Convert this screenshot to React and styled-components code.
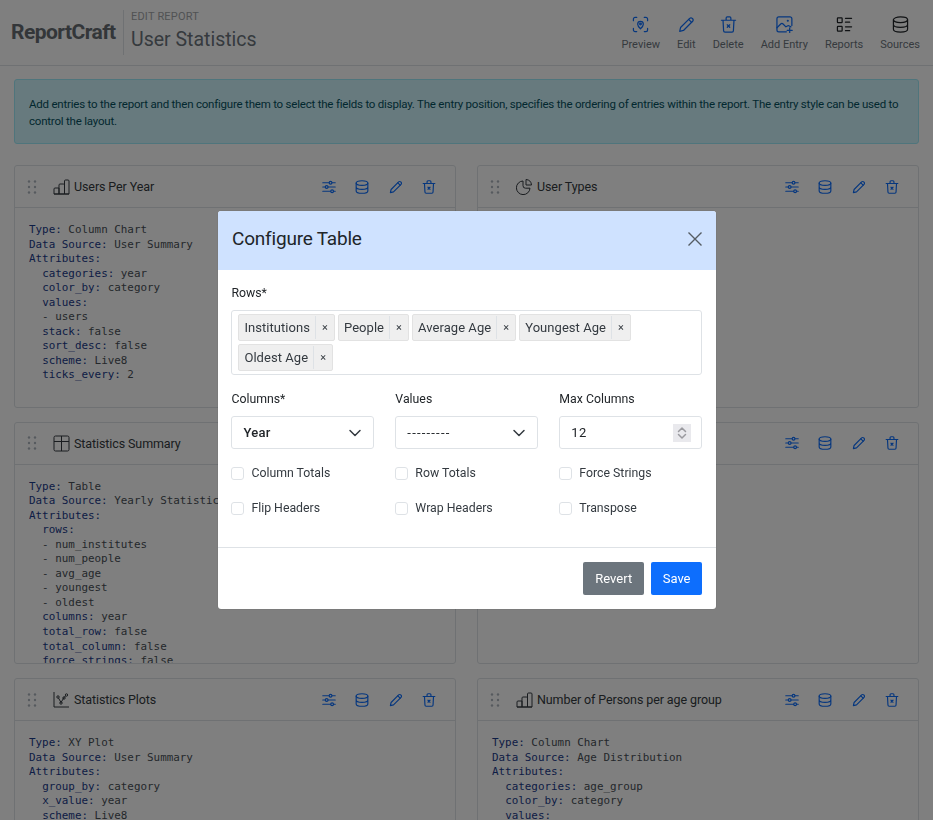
import React from "react";
import styled, { createGlobalStyle } from "styled-components";

const GlobalStyle = createGlobalStyle`
  html, body {
    margin: 0;
    height: 100%;
    overflow: hidden;
    background: #fff;
    font-family: Roboto, "Noto Sans", sans-serif;
    color: #212529;
  }
  * { box-sizing: border-box; }
`;

const Page = styled.div`
  height: 820px;
  overflow: hidden;
`;

const Header = styled.header`
  display: flex;
  align-items: center;
  height: 66px;
  padding: 0 13px 0 11px;
  border-bottom: 1px solid #dee2e6;
`;

const Logo = styled.div`
  width: 112px;
  padding-bottom: 2px;
  font-size: 21px;
  font-weight: 700;
  letter-spacing: -0.55px;
  color: #666c72;
  white-space: nowrap;
`;

const TitleBlock = styled.div`
  border-left: 1px solid #dee2e6;
  height: 45px;
  padding-left: 7px;
  display: flex;
  flex-direction: column;
`;

const Eyebrow = styled.div`
  font-size: 11px;
  line-height: 13px;
  color: #a2a5a8;
  letter-spacing: 0.2px;
`;

const PageTitle = styled.div`
  font-size: 19.5px;
  line-height: 33px;
  color: #6c757d;
`;

const Toolbar = styled.nav`
  margin-left: auto;
  display: flex;
  gap: 17px;
`;

const Tool = styled.div`
  display: flex;
  flex-direction: column;
  align-items: center;
  padding-top: 2px;
  font-size: 11px;
  line-height: 14px;
  color: #6c757d;
  gap: 5px;
`;

const ToolIcon = styled.svg`
  width: 17px;
  height: 17px;
  fill: none;
  stroke: ${(p) => p.$color || "#0d6efd"};
  stroke-width: 1.3;
  stroke-linecap: round;
  stroke-linejoin: round;
`;

const Notice = styled.div`
  margin: 13px 14px 21px;
  padding: 16px 14px;
  height: 65px;
  background: #cff4fc;
  border: 1px solid #9eeaf9;
  border-radius: 3px;
  color: #055160;
  font-size: 11.5px;
  letter-spacing: -0.21px;
  line-height: 17px;
`;

const Grid = styled.div`
  display: grid;
  grid-template-columns: 442px 442px;
  column-gap: 21px;
  row-gap: 14px;
  padding: 0 14px;
`;

const Card = styled.section`
  height: 242.5px;
  border: 1px solid #dee2e6;
  border-radius: 3px;
  overflow: hidden;
`;

const CardHeader = styled.div`
  display: flex;
  align-items: center;
  height: 42px;
  padding: 0 19px 0 12px;
  border-bottom: 1px solid #dee2e6;
  font-size: 12.5px;
  letter-spacing: -0.1px;
  color: #343a40;
`;

const Grip = styled.svg`
  width: 10px;
  height: 14px;
  margin-right: 16px;
  fill: #adb5bd;
`;

const TitleIcon = styled.svg`
  width: 17px;
  height: 17px;
  margin-right: 4px;
  fill: none;
  stroke: #343a40;
  stroke-width: 1;
`;

const CardActions = styled.div`
  margin-left: auto;
  display: flex;
  gap: 19.3px;
`;

const ActionIcon = styled(ToolIcon)`
  width: 14px;
  height: 14px;
  stroke-width: 1.5;
`;

const Yaml = styled.pre`
  margin: 0;
  padding: 15px 14px 0;
  font-family: "DejaVu Sans Mono", monospace;
  font-size: 10.9px;
  line-height: 14.55px;
  letter-spacing: 0;
  color: #495057;
`;

const Key = styled.span`
  color: #1a3a8a;
`;

const Backdrop = styled.div`
  position: fixed;
  inset: 0;
  background: rgba(0, 0, 0, 0.5);
`;

const Modal = styled.div`
  position: fixed;
  left: 218px;
  top: 211px;
  width: 498px;
  height: 398px;
  background: #fff;
  border-radius: 3px;
  display: flex;
  flex-direction: column;
  overflow: hidden;
  box-shadow: 0 0 1px rgba(0, 0, 0, 0.4);
`;

const ModalHeader = styled.div`
  height: 59px;
  flex: none;
  background: #cfe2ff;
  display: flex;
  align-items: center;
  justify-content: space-between;
  padding: 0 14px 4px 14px;
`;

const ModalTitle = styled.h5`
  margin: 0;
  font-size: 19px;
  letter-spacing: -0.2px;
  font-weight: 400;
  color: #212529;
`;

const CloseIcon = styled.svg`
  width: 14px;
  height: 14px;
  stroke: #555c63;
  stroke-width: 1.4;
  fill: none;
`;

const ModalBody = styled.div`
  flex: 1;
  padding: 14px 14px 0 13.4px;
`;

const Label = styled.div`
  font-size: 12.3px;
  line-height: 17px;
  color: #212529;
  padding-top: 1px;
  margin-bottom: 8px;
`;

const TagBox = styled.div`
  display: flex;
  flex-wrap: wrap;
  gap: 3px 3px;
  min-height: 65px;
  padding: 3px 6px;
  border: 1px solid #dee2e6;
  border-radius: 3px;
  margin-bottom: 15px;
`;

const Tag = styled.div`
  display: flex;
  align-items: center;
  height: 27px;
  background: #efefef;
  border: 1px solid #e2e2e2;
  border-radius: 2px;
  font-size: 13px;
  letter-spacing: 0.05px;
  color: #343a40;
`;

const TagText = styled.span`
  padding: 0 5px;
  line-height: 23px;
  border-right: 1px solid #dee2e6;
`;

const TagClose = styled.span`
  width: 18px;
  text-align: center;
  font-size: 11px;
`;

const FormGrid = styled.div`
  display: grid;
  grid-template-columns: repeat(3, 1fr);
  column-gap: 21.3px;
`;

const Control = styled.div`
  position: relative;
  display: flex;
  align-items: center;
  justify-content: space-between;
  height: 33px;
  padding: 0 11px;
  border: 1px solid #dee2e6;
  border-radius: 3px;
  font-size: 13px;
  font-weight: ${(p) => (p.$bold ? 500 : 400)};
  letter-spacing: ${(p) => (p.$spaced ? "1.2px" : "0.3px")};
  color: #212529;
  margin-bottom: 12px;
`;

const Chevron = styled.svg`
  width: 14px;
  height: 14px;
  fill: none;
  stroke: ${(p) => p.$color || "#343a40"};
  stroke-width: 1.5;
  stroke-linecap: round;
  stroke-linejoin: round;
`;

const Spinner = styled.div`
  width: 18px;
  height: 18px;
  margin-right: -1px;
  background: #e9e9ed;
  display: flex;
  align-items: center;
  justify-content: center;
`;

const Check = styled.label`
  display: flex;
  align-items: center;
  gap: 7px;
  height: 23px;
  margin-bottom: 12px;
  font-size: 12.3px;
  color: #343a40;
`;

const Box = styled.span`
  width: 13px;
  height: 13px;
  margin-top: 1px;
  border: 1px solid #dee2e6;
  border-radius: 3px;
`;

const ModalFooter = styled.div`
  flex: none;
  height: 62px;
  border-top: 1px solid #dee2e6;
  display: flex;
  align-items: center;
  justify-content: flex-end;
  gap: 7px;
  padding: 0 14px;
`;

const Button = styled.button`
  height: 33px;
  padding: 0 ${(p) => (p.$primary ? "11.5px" : "12px")};
  border: 0;
  border-radius: 2px;
  color: #fff;
  font-family: inherit;
  font-size: 13px;
  background: ${(p) => (p.$primary ? "#0d6efd" : "#6c757d")};
`;

const icons = {
  preview: (
    <>
      <path d="M1.5 5V3.2a1.7 1.7 0 0 1 1.7-1.7H5M13 1.5h1.8a1.7 1.7 0 0 1 1.7 1.7V5M16.5 13v1.8a1.7 1.7 0 0 1-1.7 1.7H13M5 16.5H3.2a1.7 1.7 0 0 1-1.7-1.7V13" />
      <path d="M9 13.5c-1.6-1.5-3-3.2-3-4.8a3 3 0 0 1 6 0c0 1.6-1.4 3.3-3 4.8z" />
      <circle cx="9" cy="8.5" r=".9" />
    </>
  ),
  edit: (
    <>
      <path d="M1.8 16.2l.9-4 9.7-9.7a1.9 1.9 0 0 1 2.7 0l.4.4a1.9 1.9 0 0 1 0 2.7l-9.7 9.7z" />
      <path d="M11.3 3.6l3.1 3.1" />
    </>
  ),
  trash: (
    <>
      <path d="M1.5 4.5h15M3.2 4.5l.6 11a1.5 1.5 0 0 0 1.5 1.5h7.4a1.5 1.5 0 0 0 1.5-1.5l.6-11M6.5 4.5V2.2A1.2 1.2 0 0 1 7.7 1h2.6a1.2 1.2 0 0 1 1.2 1.2v2.3" />
      <path d="M7.7 9.3l2.6 2.6M10.3 9.3l-2.6 2.6" />
    </>
  ),
  add: (
    <>
      <path d="M16.8 10V3A2 2 0 0 0 14.8 1H3A2 2 0 0 0 1 3v11.8a2 2 0 0 0 2 2h8" />
      <path d="M1 12.5L5 8.5c.8-.8 1.7-.8 2.5 0l3 3 1.5-1c.7-.5 1.5-.5 2.2 0l1.6 1" />
      <circle cx="12.5" cy="5" r=".5" />
      <path d="M14.5 12.5v5.3M11.8 15.2h5.4" />
    </>
  ),
  reports: (
    <>
      <rect x="1.5" y="2" width="5" height="5" rx=".6" />
      <rect x="1.5" y="11" width="5" height="5" rx=".6" />
      <path d="M10 2.5h6.5M10 6.5h4.5M10 11.5h6.5M10 15.5h4.5" />
    </>
  ),
  database: (
    <>
      <ellipse cx="9" cy="4" rx="7.5" ry="3" />
      <path d="M1.5 4v10c0 1.7 3.4 3 7.5 3s7.5-1.3 7.5-3V4M1.5 9c0 1.7 3.4 3 7.5 3s7.5-1.3 7.5-3" />
    </>
  ),
  sliders: (
    <>
      <path d="M1 3.5h8M13 3.5h4M1 9h3M8 9h9M1 14.5h10M15 14.5h2" />
      <circle cx="11" cy="3.5" r="1.8" />
      <circle cx="6" cy="9" r="1.8" />
      <circle cx="13" cy="14.5" r="1.8" />
    </>
  ),
};

const titleIcons = {
  column: <path d="M1 16V11a1 1 0 0 1 1-1h4v6zM6 16V7a1 1 0 0 1 1-1h3.5a1 1 0 0 1 1 1v9zM11.5 16V3a1 1 0 0 1 1-1H15a1 1 0 0 1 1 1v13zM1 16h15" />,
  table: <path d="M2.5 1h12a1.5 1.5 0 0 1 1.5 1.5v12a1.5 1.5 0 0 1-1.5 1.5h-12A1.5 1.5 0 0 1 1 14.5v-12A1.5 1.5 0 0 1 2.5 1zM1 6.5h15M8.5 1v15" />,
  pie: (
    <>
      <path d="M7 3a6.8 6.8 0 1 0 7 7.2H9.5A2.5 2.5 0 0 1 7 7.7z" />
      <path d="M10 1.5a6 6 0 0 1 5.5 5.5H10z" />
    </>
  ),
  scatter: (
    <>
      <path d="M1 1v15h15" />
      <path d="M5.5 7L8 11.5l3-5 1.5-1.5" />
      <circle cx="5" cy="6" r="1.2" />
      <circle cx="8" cy="12" r="1.2" />
      <circle cx="11" cy="7" r="1.2" />
      <circle cx="13.5" cy="4" r="1.2" />
    </>
  ),
};

function ToolButton({ icon, label, color }) {
  return (
    <Tool>
      <ToolIcon viewBox="0 0 18 18" $color={color}>{icons[icon]}</ToolIcon>
      {label}
    </Tool>
  );
}

function YamlLine({ line }) {
  const m = line.match(/^(\s*)([\w ]+:)(.*)$/);
  if (!m) return <>{line}{"\n"}</>;
  return <>{m[1]}<Key>{m[2]}</Key>{m[3]}{"\n"}</>;
}

function EntryCard({ title, icon, lines }) {
  return (
    <Card>
      <CardHeader>
        <Grip viewBox="0 0 10 14">
          {[1.5, 7, 12.5].flatMap((y) =>
            [2, 8].map((x) => <circle key={`${x}-${y}`} cx={x} cy={y} r="1.2" />)
          )}
        </Grip>
        <TitleIcon viewBox="0 0 17 17">{titleIcons[icon]}</TitleIcon>
        {title}
        <CardActions>
          {["sliders", "database", "edit", "trash"].map((name) => (
            <ActionIcon key={name} viewBox="0 0 18 18">{icons[name]}</ActionIcon>
          ))}
        </CardActions>
      </CardHeader>
      <Yaml>
        {lines.map((line, i) => <YamlLine key={i} line={line} />)}
      </Yaml>
    </Card>
  );
}

const entries = [
  {
    title: "Users Per Year",
    icon: "column",
    lines: [
      "Type: Column Chart",
      "Data Source: User Summary",
      "Attributes:",
      "  categories: year",
      "  color_by: category",
      "  values:",
      "  - users",
      "  stack: false",
      "  sort_desc: false",
      "  scheme: Live8",
      "  ticks_every: 2",
    ],
  },
  { title: "User Types", icon: "pie", lines: [] },
  {
    title: "Statistics Summary",
    icon: "table",
    lines: [
      "Type: Table",
      "Data Source: Yearly Statistics",
      "Attributes:",
      "  rows:",
      "  - num_institutes",
      "  - num_people",
      "  - avg_age",
      "  - youngest",
      "  - oldest",
      "  columns: year",
      "  total_row: false",
      "  total_column: false",
      "  force_strings: false",
    ],
  },
  { title: "", icon: "column", lines: [] },
  {
    title: "Statistics Plots",
    icon: "scatter",
    lines: [
      "Type: XY Plot",
      "Data Source: User Summary",
      "Attributes:",
      "  group_by: category",
      "  x_value: year",
      "  scheme: Live8",
    ],
  },
  {
    title: "Number of Persons per age group",
    icon: "column",
    lines: [
      "Type: Column Chart",
      "Data Source: Age Distribution",
      "Attributes:",
      "  categories: age_group",
      "  color_by: category",
      "  values:",
    ],
  },
];

const tags = ["Institutions", "People", "Average Age", "Youngest Age", "Oldest Age"];
const checks = ["Column Totals", "Row Totals", "Force Strings", "Flip Headers", "Wrap Headers", "Transpose"];

function SelectChevron() {
  return (
    <Chevron viewBox="0 0 14 14"><path d="M2 4.5l5 5 5-5" /></Chevron>
  );
}

export default function App() {
  return (
    <>
      <GlobalStyle />
      <Page>
        <Header>
          <Logo>ReportCraft</Logo>
          <TitleBlock>
            <Eyebrow>EDIT REPORT</Eyebrow>
            <PageTitle>User Statistics</PageTitle>
          </TitleBlock>
          <Toolbar>
            <ToolButton icon="preview" label="Preview" />
            <ToolButton icon="edit" label="Edit" />
            <ToolButton icon="trash" label="Delete" />
            <ToolButton icon="add" label="Add Entry" />
            <ToolButton icon="reports" label="Reports" color="#212529" />
            <ToolButton icon="database" label="Sources" color="#212529" />
          </Toolbar>
        </Header>
        <Notice>
          Add entries to the report and then configure them to select the fields to display. The entry position, specifies the ordering of entries within the report. The entry style can be used to control the layout.
        </Notice>
        <Grid>
          {entries.map((entry, i) => <EntryCard key={i} {...entry} />)}
        </Grid>
      </Page>
      <Backdrop />
      <Modal>
        <ModalHeader>
          <ModalTitle>Configure Table</ModalTitle>
          <CloseIcon viewBox="0 0 14 14"><path d="M.5.5l13 13M13.5.5l-13 13" /></CloseIcon>
        </ModalHeader>
        <ModalBody>
          <Label>Rows*</Label>
          <TagBox>
            {tags.map((tag) => (
              <Tag key={tag}>
                <TagText>{tag}</TagText>
                <TagClose>×</TagClose>
              </Tag>
            ))}
          </TagBox>
          <FormGrid>
            <div>
              <Label>Columns*</Label>
              <Control $bold>Year<SelectChevron /></Control>
            </div>
            <div>
              <Label>Values</Label>
              <Control $spaced>---------<SelectChevron /></Control>
            </div>
            <div>
              <Label>Max Columns</Label>
              <Control>
                12
                <Spinner>
                  <Chevron viewBox="0 0 14 14" $color="#9a9a9f"><path d="M3.5 5.5L7 2l3.5 3.5M3.5 8.5L7 12l3.5-3.5" /></Chevron>
                </Spinner>
              </Control>
            </div>
            {checks.map((label) => (
              <Check key={label}><Box />{label}</Check>
            ))}
          </FormGrid>
        </ModalBody>
        <ModalFooter>
          <Button>Revert</Button>
          <Button $primary>Save</Button>
        </ModalFooter>
      </Modal>
    </>
  );
}
